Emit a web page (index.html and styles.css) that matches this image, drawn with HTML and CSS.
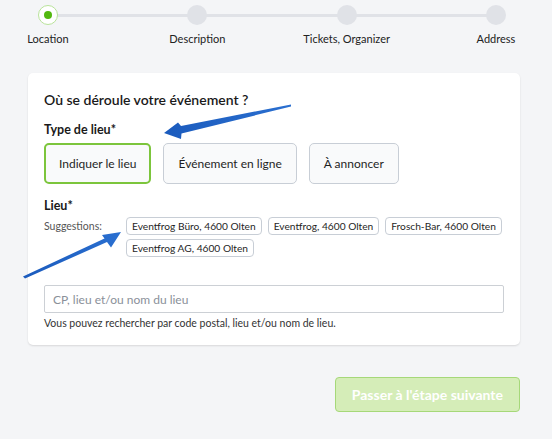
FILE: index.html
```html
<!DOCTYPE html>
<html lang="fr">
<head>
<meta charset="utf-8">
<title>Créer un événement - Lieu</title>
<link rel="stylesheet" href="styles.css">
</head>
<body>
  <div class="steps">
    <div class="step active"><span class="dot"></span><span class="step-label">Location</span></div>
    <div class="step"><span class="dot"></span><span class="step-label">Description</span></div>
    <div class="step"><span class="dot"></span><span class="step-label">Tickets, Organizer</span></div>
    <div class="step"><span class="dot"></span><span class="step-label">Address</span></div>
  </div>

  <div class="wrap">
    <div class="card">
      <h1 class="title">Où se déroule votre événement ?</h1>

      <div class="label">Type de lieu*</div>
      <div class="types">
        <button class="type selected">Indiquer le lieu</button>
        <button class="type">Événement en ligne</button>
        <button class="type">À annoncer</button>
      </div>

      <div class="label label-place">Lieu*</div>
      <div class="suggest">
        <span class="suggest-label">Suggestions:</span>
        <div class="chips">
          <span class="chip">Eventfrog Büro, 4600 Olten</span>
          <span class="chip">Eventfrog, 4600 Olten</span>
          <span class="chip">Frosch-Bar, 4600 Olten</span>
          <span class="chip">Eventfrog AG, 4600 Olten</span>
        </div>
      </div>

      <input class="search" type="text" placeholder="CP, lieu et/ou nom du lieu">
      <p class="help">Vous pouvez rechercher par code postal, lieu et/ou nom de lieu.</p>
    </div>

    <div class="actions">
      <button class="next" disabled>Passer à l'étape suivante</button>
    </div>
  </div>

  <svg class="arrows" width="552" height="439" viewBox="0 0 552 439">
    <defs>
      <linearGradient id="blue" x1="0" y1="0" x2="1" y2="0">
        <stop offset="0" stop-color="#1b5bbd"/>
        <stop offset="1" stop-color="#2a6fd0"/>
      </linearGradient>
    </defs>
    <path d="M291 104.5 L181 126 L178 122.5 L164 133 L181 139 L181.5 133.5 L291 106.5 Z" fill="url(#blue)"/>
    <path d="M25 278.5 L107 242 L111 247.5 L121 232 L102 235 L104.5 238.5 L23 276.5 Z" fill="url(#blue)"/>
  </svg>
</body>
</html>
```

FILE: styles.css
```css
body { margin: 0; background: #f4f5f7; font-family: Lato, "Open Sans", sans-serif; color: #1f1f1f; position: relative; width: 552px; height: 439px; overflow: hidden; }

.steps { position: relative; display: flex; justify-content: space-between; margin: 5px 28px 0 20px; }
.steps:before { content: ""; position: absolute; left: 28px; right: 28px; top: 9px; height: 3px; background: #e0e2e7; }
.step { position: relative; width: 56px; display: flex; flex-direction: column; align-items: center; }
.dot { width: 20px; height: 20px; border-radius: 50%; background: #e0e2e7; box-sizing: border-box; }
.step.active .dot { background: #fff; border: 1px solid #b9e39a; position: relative; }
.step.active .dot:after { content: ""; position: absolute; left: 5px; top: 5px; width: 8px; height: 8px; border-radius: 50%; background: #52b80f; }
.step-label { margin-top: 7px; font-size: 11px; line-height: 14px; white-space: nowrap; color: #222; }

.wrap { width: 492px; margin: 27px 0 0 28px; }
.card { background: #fff; border-radius: 5px; box-shadow: 0 1px 2px rgba(0,0,0,.12); padding: 17px 16px 15px; }
.title { margin: 0; font-size: 14px; line-height: 20px; font-weight: 600; color: #1a1a1a; }

.label { margin-top: 12px; font-size: 12.5px; line-height: 16px; font-weight: 700; color: #1a1a1a; }
.label-place { margin-top: 14px; }

.types { display: flex; gap: 12px; margin-top: 5px; }
.type { height: 41px; padding: 0 14px; background: #f9fafb; border: 1px solid #c8ced6; border-radius: 5px; font-family: inherit; font-size: 12px; color: #1f1f1f; }
.type.selected { border: 2px solid #7cc53c; padding: 0 13px; }

.suggest { display: flex; align-items: flex-start; margin-top: 3px; }
.suggest-label { width: 82px; flex: none; font-size: 10.5px; line-height: 18px; color: #555; }
.chips { display: flex; flex-wrap: wrap; gap: 4px 6px; }
.chip { height: 18px; line-height: 16px; box-sizing: border-box; padding: 0 5px; border: 1px solid #c8ced6; border-radius: 4px; font-size: 10.2px; color: #1f1f1f; background: #fff; white-space: nowrap; }

.search { display: block; box-sizing: border-box; width: 100%; height: 28px; margin-top: 28px; padding: 0 8px; border: 1px solid #ccd0d5; border-radius: 2px; font-family: inherit; font-size: 12px; color: #1f1f1f; }
.search::placeholder { color: #8a9099; }
.help { margin: 3px 0 0; font-size: 10.5px; line-height: 14px; color: #333; }

.actions { display: flex; justify-content: flex-end; margin-top: 32px; }
.next { height: 35px; padding: 0 16px; background: #d5edb8; border: 1px solid #a6d879; border-radius: 4px; font-family: inherit; font-size: 14px; font-weight: 700; color: #fff; }

.arrows { position: absolute; left: 0; top: 0; pointer-events: none; }
```
